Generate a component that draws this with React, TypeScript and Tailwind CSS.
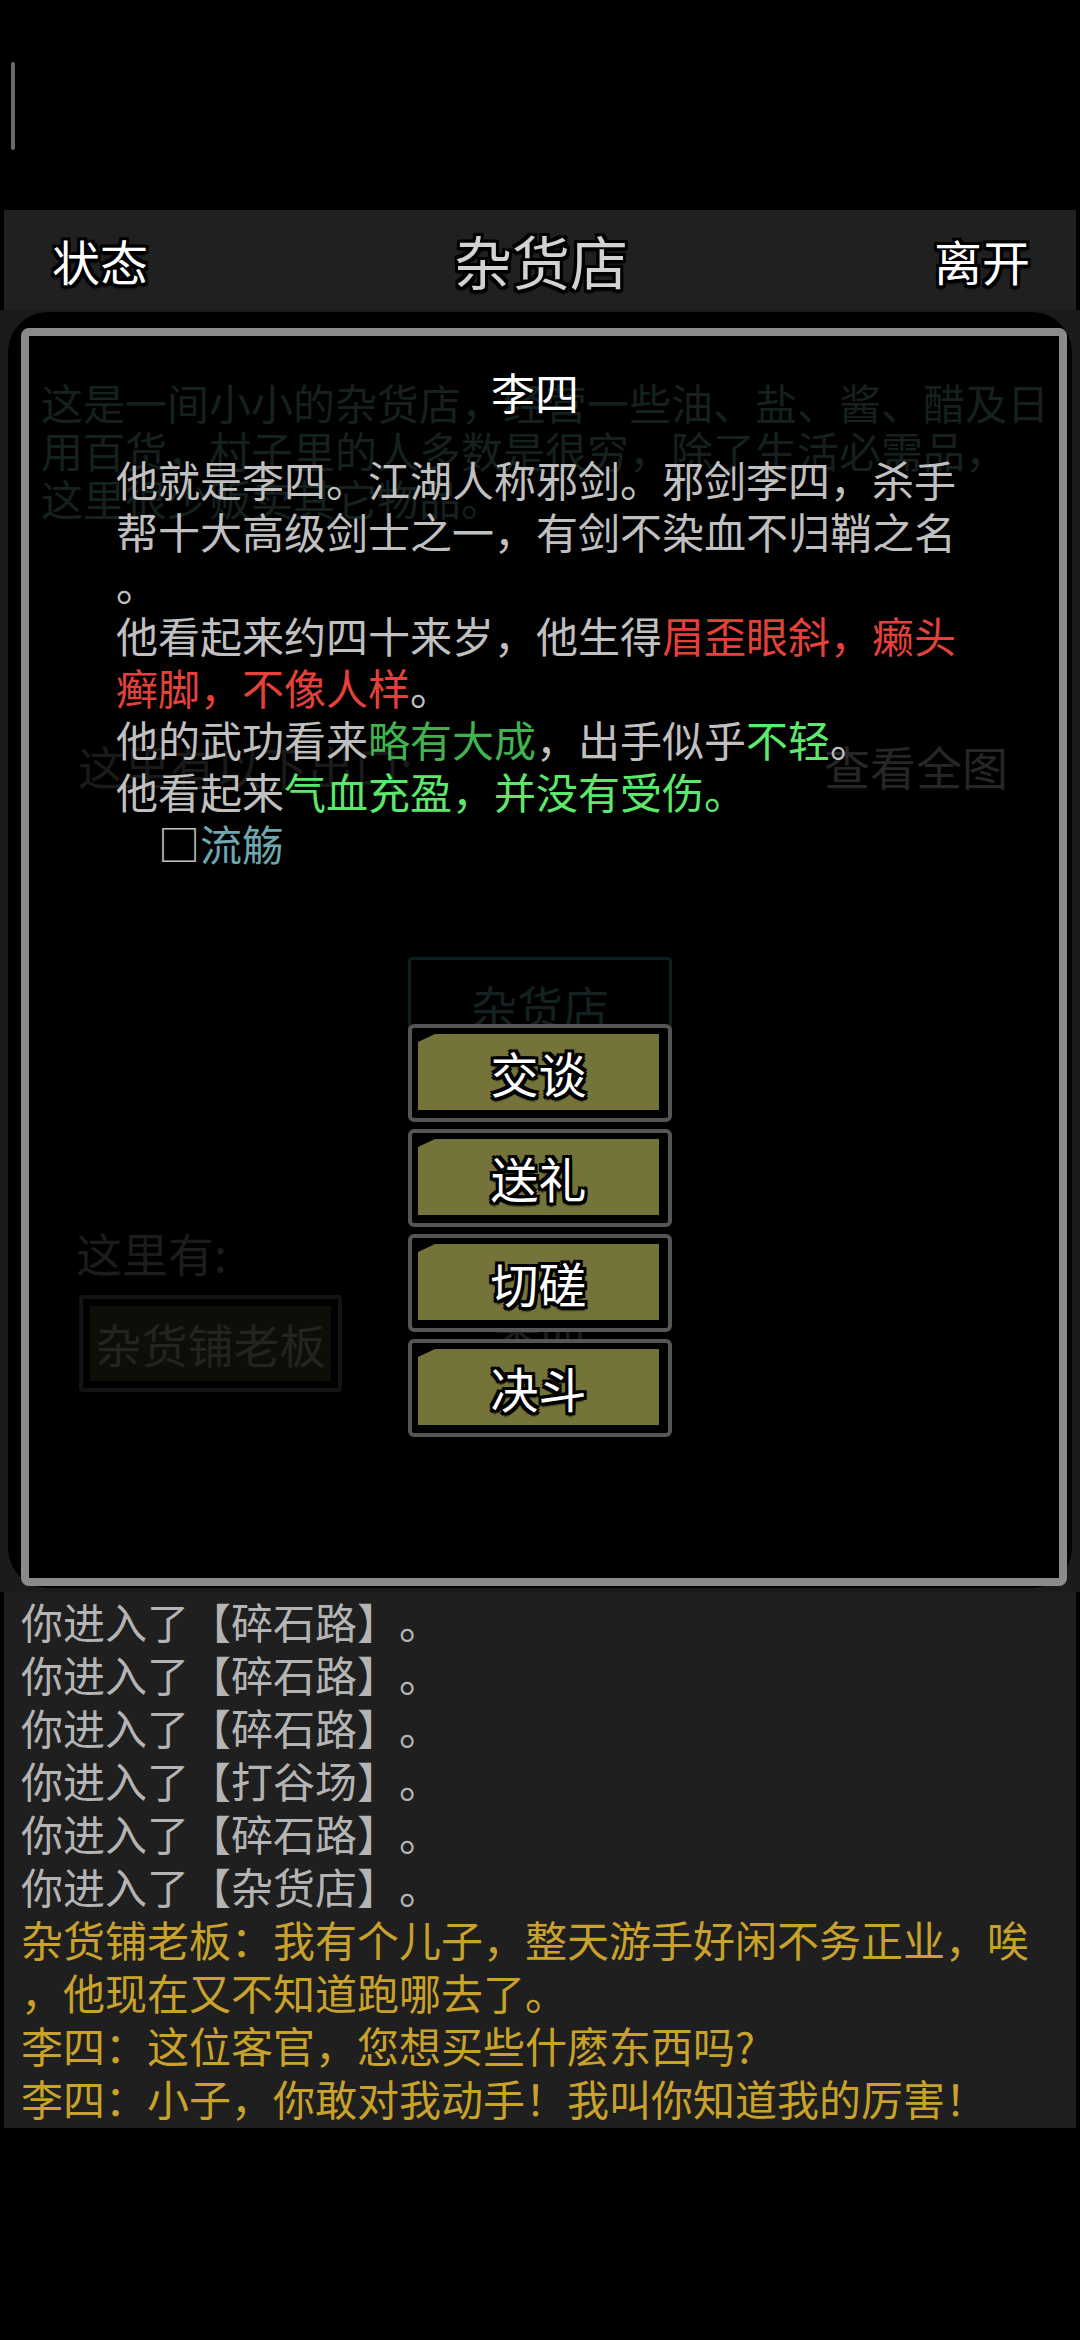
import React from "react";

// 3px black outline used by the header labels and the olive buttons
const outline =
  "[text-shadow:-3px_-3px_0_#000,3px_-3px_0_#000,-3px_3px_0_#000,3px_3px_0_#000,0_3px_0_#000,0_-3px_0_#000,3px_0_0_#000,-3px_0_0_#000,0_4px_2px_#000]";

const ACTIONS = ["交谈", "送礼", "切磋", "决斗"];

const LOG: { text: string; tone: "gray" | "gold" }[] = [
  { text: "你进入了【碎石路】。", tone: "gray" },
  { text: "你进入了【碎石路】。", tone: "gray" },
  { text: "你进入了【碎石路】。", tone: "gray" },
  { text: "你进入了【打谷场】。", tone: "gray" },
  { text: "你进入了【碎石路】。", tone: "gray" },
  { text: "你进入了【杂货店】。", tone: "gray" },
  { text: "杂货铺老板：我有个儿子，整天游手好闲不务正业，唉", tone: "gold" },
  { text: "，他现在又不知道跑哪去了。", tone: "gold" },
  { text: "李四：这位客官，您想买些什麽东西吗?", tone: "gold" },
  { text: "李四：小子，你敢对我动手！我叫你知道我的厉害！", tone: "gold" },
];

function ActionButton({ label }: { label: string }) {
  return (
    <div className="h-[98px] w-[264px] rounded-[6px] border-[4px] border-[#555555] bg-black pt-[6px] pl-[6px] pr-[9px] pb-[8px]">
      <div className="flex h-full w-full items-center justify-center bg-[#73733a] [clip-path:polygon(17px_0,100%_0,100%_100%,0_100%,0_8px)]">
        <span className={`text-[48px] leading-none text-white ${outline}`}>{label}</span>
      </div>
    </div>
  );
}

/** Dimmed room view that sits under the dialog. */
function RoomBehind() {
  return (
    <div className="mx-[8px] h-[1276px] rounded-t-[40px] rounded-b-[40px] bg-black pt-[66px] pl-[33px] pr-[10px]">
      <div className="whitespace-nowrap text-[42px] leading-[48px] text-[#15211f]">
        <div>这是一间小小的杂货店，经营一些油、盐、酱、醋及日</div>
        <div>用百货，村子里的人多数是很穷，除了生活必需品，</div>
        <div>这里很少贩卖其它物品。</div>
      </div>

      <div className="mt-[213px] flex justify-between text-[46px] leading-[60px]">
        <span className="ml-[37px] text-[#1a1a1a]">这里有以下出口:</span>
        <span className="mr-[54px] text-[#262626]">查看全图</span>
      </div>

      <div className="mt-[162px] ml-[367px] flex h-[96px] w-[264px] items-center justify-center rounded-[4px] border-[3px] border-[#0c1f1f] text-[46px] text-[#132221]">
        杂货店
      </div>
      <div className="mt-[48px] ml-[367px] flex h-[96px] w-[264px] items-center justify-center text-[46px] text-[#1a1a1a]">
        碎石路
      </div>

      <div className="mt-[25px] ml-[35px] text-[46px] leading-[60px] text-[#1c1c1c]">这里有:</div>

      <div className="mt-[13px] flex">
        <div className="ml-[38px] h-[97px] w-[263px] rounded-[4px] border-[4px] border-[#131313] p-[7px]">
          <div className="flex h-full w-full items-center justify-center bg-[#0e0e08] text-[46px] text-[#232323]">
            杂货铺老板
          </div>
        </div>
        <div className="ml-[66px] flex h-[97px] w-[264px] items-center justify-center text-[46px] text-[#1d1d1d]">
          李四
        </div>
      </div>
    </div>
  );
}

function NpcDialog() {
  return (
    <div className="absolute left-[21px] top-[18px] flex h-[1258px] w-[1046px] flex-col rounded-[8px] border-[8px] border-[#8b8b8b]">
      <div className="pt-[28px] pr-[18px] text-center text-[44px] leading-[56px] text-white">李四</div>

      <div className="mt-[33px] whitespace-nowrap pl-[87px] text-[42px] leading-[52px] text-[#c0c0c0]">
        <div>他就是李四。江湖人称邪剑。邪剑李四，杀手</div>
        <div>帮十大高级剑士之一，有剑不染血不归鞘之名</div>
        <div>。</div>
        <div>
          他看起来约四十来岁，他生得<span className="text-[#e6403a]">眉歪眼斜，癞头</span>
        </div>
        <div>
          <span className="text-[#e6403a]">癣脚，不像人样</span>。
        </div>
        <div>
          他的武功看来<span className="text-[#3fb34f]">略有大成</span>，出手似乎
          <span className="text-[#5cec6c]">不轻</span>。
        </div>
        <div>
          他看起来<span className="text-[#5ce86c]">气血充盈，并没有受伤。</span>
        </div>
        <div className="pl-[42px]">
          □<span className="text-[#6fa7b1]">流觞</span>
        </div>
      </div>

      <div className="mt-[155px] flex flex-col items-center gap-[7px] pr-[8px]">
        {ACTIONS.map((a) => (
          <ActionButton key={a} label={a} />
        ))}
      </div>
    </div>
  );
}

export default function App() {
  return (
    <div className="min-h-[2340px] w-[1080px] bg-black font-['Noto_Sans_CJK_SC','Noto_Sans',sans-serif] [text-spacing-trim:space-all]">
      {/* status area */}
      <div className="h-[210px] pt-[62px] pl-[11px]">
        <div className="h-[88px] w-[4px] rounded-full bg-[#6a6a6a]" />
      </div>

      {/* title bar */}
      <div className="mx-[4px] flex h-[100px] items-center justify-between bg-[#202020] pl-[48px] pr-[46px]">
        <span className={`text-[48px] leading-none text-white ${outline}`}>状态</span>
        <span className={`text-[58px] leading-none text-[#d2d2d2] ${outline}`}>杂货店</span>
        <span className={`text-[48px] leading-none text-white ${outline}`}>离开</span>
      </div>

      {/* room + dialog */}
      <div className="relative h-[1282px] bg-[#1b1b1d] pt-[2px]">
        <RoomBehind />
        <NpcDialog />
      </div>

      {/* message log */}
      <div className="mx-[4px] h-[536px] whitespace-nowrap bg-[#1f1f1f] pt-[2px] pl-[17px] text-[42px] leading-[53px]">
        {LOG.map((line, i) => (
          <div key={i} className={line.tone === "gold" ? "text-[#c8a22a]" : "text-[#b4b4b4]"}>
            {line.text}
          </div>
        ))}
      </div>
    </div>
  );
}
